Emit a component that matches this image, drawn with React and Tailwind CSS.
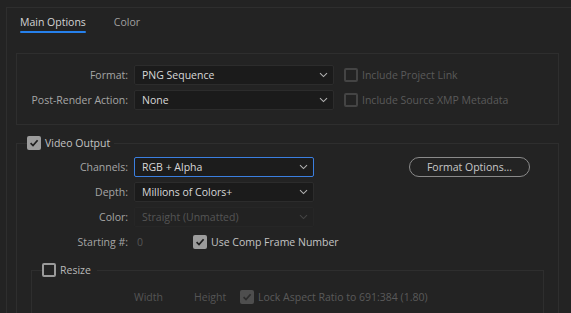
import React from 'react';

const Chevron = ({ className = 'text-[#b8b8b8]' }) => (
  <svg width="9" height="6" viewBox="0 0 9 6" className={className}>
    <path d="M1 1.2 L4.5 4.6 L8 1.2" fill="none" stroke="currentColor" strokeWidth="1.1" />
  </svg>
);

const Select = ({ value, width, focused, disabled }) => (
  <div
    className={`${width} h-[20px] flex items-center justify-between pl-[7px] pr-[5px] rounded-[2px] border ${
      focused ? 'border-[#3b7fe0] bg-[#1c1c1c]' : disabled ? 'border-[#262626] bg-[#222222]' : 'border-[#2c2c2c] bg-[#1b1b1b]'
    }`}
  >
    <span className={disabled ? 'text-[#555555]' : 'text-[#d8d8d8]'}>{value}</span>
    <Chevron className={disabled ? 'text-[#444444]' : 'text-[#b0b0b0]'} />
  </div>
);

const Checkbox = ({ checked, variant = 'normal' }) => {
  if (checked) {
    const bg = variant === 'disabled' ? 'bg-[#4e4e4e]' : 'bg-[#9c9c9c]';
    const stroke = variant === 'disabled' ? '#2c2c2c' : '#1f1f1f';
    return (
      <div className={`w-[14px] h-[14px] rounded-[2px] ${bg} flex items-center justify-center shrink-0`}>
        <svg width="10" height="10" viewBox="0 0 10 10">
          <path d="M1.6 5.2 L4 7.6 L8.6 2.2" fill="none" stroke={stroke} strokeWidth="1.7" />
        </svg>
      </div>
    );
  }
  const border = variant === 'disabled' ? 'border-[#444444]' : 'border-[#9a9a9a]';
  return <div className={`w-[14px] h-[14px] rounded-[2px] border-2 ${border} shrink-0`} />;
};

const Row = ({ label, children }) => (
  <div className="flex items-center h-[20px]">
    <div className="w-[111px] text-right text-[#a6a6a6] mr-[6px]">{label}</div>
    {children}
  </div>
);

export default function App() {
  return (
    <div className="w-[571px] h-[313px] overflow-hidden bg-[#232323] pl-[6px] pt-[7px] font-['Open_Sans',sans-serif] text-[10.5px] leading-[16px]">
      <div className="h-[400px] border-l border-t border-[#2e2e2e]">
        {/* Tabs */}
        <div className="flex pl-[13px] pt-[6px] gap-[28px]">
          <div className="flex flex-col">
            <span className="text-[#d4d4d4]">Main Options</span>
            <div className="h-[2px] mt-[1px] bg-[#2680eb] rounded-full" />
          </div>
          <span className="text-[#a0a0a0]">Color</span>
        </div>

        {/* Format panel */}
        <div className="ml-[9px] mt-[20px] w-[543px] h-[72px] border border-[#2e2e2e] pt-[11px] flex flex-col gap-[5px]">
          <Row label="Format:">
            <Select value="PNG Sequence" width="w-[200px]" />
            <div className="flex items-center gap-[4px] ml-[10px]">
              <Checkbox variant="disabled" />
              <span className="text-[#5a5a5a]">Include Project Link</span>
            </div>
          </Row>
          <Row label="Post-Render Action:">
            <Select value="None" width="w-[200px]" />
            <div className="flex items-center gap-[4px] ml-[10px]">
              <Checkbox variant="disabled" />
              <span className="text-[#5a5a5a]">Include Source XMP Metadata</span>
            </div>
          </Row>
        </div>

        {/* Video Output */}
        <fieldset className="ml-[9px] mt-[10px] w-[543px] border border-[#2e2e2e]">
          <legend className="ml-[10px] pr-[4px] h-[16px] flex items-center gap-[4px]">
            <Checkbox checked />
            <span className="text-[#c4c4c4]">Video Output</span>
          </legend>
          <div className="pt-[6px] flex flex-col gap-[5px]">
            <Row label="Channels:">
              <Select value="RGB + Alpha" width="w-[180px]" focused />
              <div className="ml-[95px] w-[121px] h-[20px] rounded-full border border-[#8a8a8a] flex items-center justify-center text-[#c8c8c8]">
                Format Options...
              </div>
            </Row>
            <Row label="Depth:">
              <Select value="Millions of Colors+" width="w-[180px]" />
            </Row>
            <Row label="Color:">
              <Select value="Straight (Unmatted)" width="w-[180px]" disabled />
            </Row>
            <Row label="Starting #:">
              <span className="w-[59px] pl-[3px] text-[#555555]">0</span>
              <div className="flex items-center gap-[4px]">
                <Checkbox checked />
                <span className="text-[#c4c4c4]">Use Comp Frame Number</span>
              </div>
            </Row>
          </div>

          {/* Resize */}
          <fieldset className="mx-[14px] mt-[10px] border border-[#2e2e2e] h-[80px]">
            <legend className="ml-[10px] pr-[6px] h-[16px] flex items-center gap-[4px]">
              <Checkbox />
              <span className="text-[#b8b8b8]">Resize</span>
            </legend>
            <div className="pt-[9px] pl-[102px] flex items-center h-[29px] text-[#555555]">
              <span className="w-[60px]">Width</span>
              <span className="w-[46px]">Height</span>
              <div className="flex items-center gap-[4px]">
                <Checkbox checked variant="disabled" />
                <span className="text-[#5a5a5a]">Lock Aspect Ratio to 691:384 (1.80)</span>
              </div>
            </div>
          </fieldset>
        </fieldset>
      </div>
    </div>
  );
}
